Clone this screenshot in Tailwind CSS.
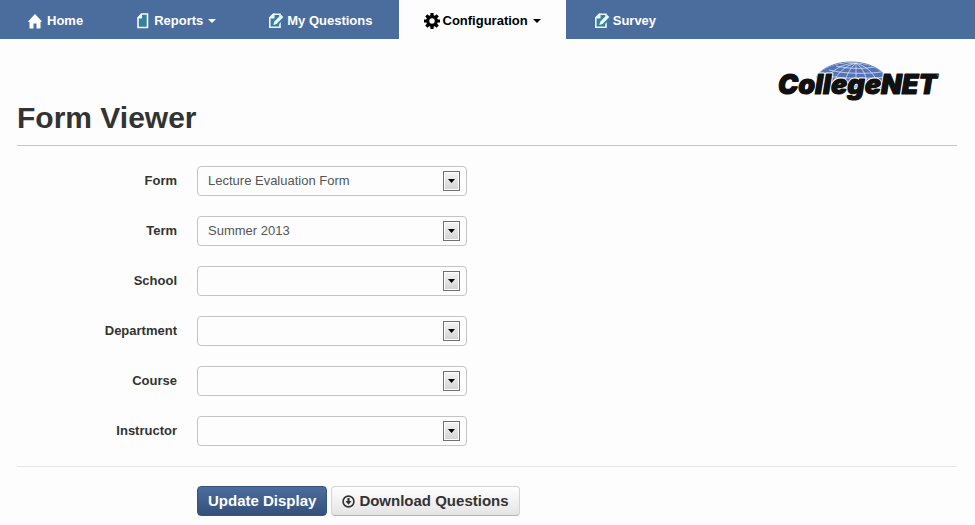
<!DOCTYPE html>
<html lang="en">
<head>
  <meta charset="UTF-8" />
  <meta name="viewport" content="width=device-width, initial-scale=1.0"/>
  <title>Form Viewer</title>
  <script src="https://cdn.jsdelivr.net/npm/@tailwindcss/browser@4"></script>
</head>
<body class="bg-[#fdfdfd] min-h-screen font-['Liberation_Sans',Arial,sans-serif] text-[13px] leading-5 text-[#333]">

  <!-- Navigation -->
  <nav class="flex h-[39px] bg-[#4b6d9e] pl-[2px] font-bold text-white">
    <a href="#" class="flex items-center gap-[3px] px-[26px] pt-[2px]">
      <svg class="size-4" viewBox="0 0 16 16" fill="currentColor"><path d="M7 1 14 8.500 12.500 9.300V15.500H8.500V10.500H5.500V15.500H1.500V9.300L0 8.500Z"/></svg>
      Home
    </a>
    <a href="#" class="flex items-center gap-[3px] px-[26px] pt-[2px]">
      <svg class="size-4" viewBox="0 0 16 16"><path d="M6.500 1H12.500V14.500H3V5Z" fill="#35809c" stroke="#f2f8fc" stroke-width="1.600"/><path d="M2.500 5.500V4.500L6 1H7V5.500Z" fill="#f2f8fc"/></svg>
      Reports
      <svg class="ml-[2px] w-2 h-1" viewBox="0 0 8 4" fill="currentColor"><path d="M0 0H8L4 4Z"/></svg>
    </a>
    <a href="#" class="flex items-center gap-[3px] px-[26px] pt-[2px]">
      <svg class="size-4" viewBox="0 0 16 16"><path d="M5.500 1.300H12V14.300H1.800V5Z" fill="#35809c" stroke="#eaf5fa" stroke-width="1.600"/><path d="M1 5.500V4.500L5 .500H6.500V5.500Z" fill="#eaf5fa"/><path d="M15 3.500 8 10.500" stroke="#35809c" stroke-width="5"/><path d="M13 1.800 15.300 4.100 8.500 11 5.300 12 6.200 8.800Z" fill="#f2f8fc"/></svg>
      My Questions
    </a>
    <a href="#" aria-current="page" class="flex items-center gap-[3px] px-[25px] pt-[2px] bg-[#fdfdfd] text-black">
      <svg class="size-4" viewBox="0 0 16 16" fill="none" stroke="currentColor"><circle cx="8" cy="8" r="4.300" stroke-width="3.200"/><path d="M8 0V3M8 13V16M0 8H3M13 8H16M2.300 2.300 4.500 4.500M11.500 11.500 13.700 13.700M13.700 2.300 11.500 4.500M4.500 11.500 2.300 13.700" stroke-width="3.200"/></svg>
      Configuration
      <svg class="ml-[2px] w-2 h-1" viewBox="0 0 8 4" fill="currentColor"><path d="M0 0H8L4 4Z"/></svg>
    </a>
    <a href="#" class="flex items-center gap-[3px] px-7 pt-[2px]">
      <svg class="size-4" viewBox="0 0 16 16"><path d="M5.500 1.300H12V14.300H1.800V5Z" fill="#35809c" stroke="#eaf5fa" stroke-width="1.600"/><path d="M1 5.500V4.500L5 .500H6.500V5.500Z" fill="#eaf5fa"/><path d="M15 3.500 8 10.500" stroke="#35809c" stroke-width="5"/><path d="M13 1.800 15.300 4.100 8.500 11 5.300 12 6.200 8.800Z" fill="#f2f8fc"/></svg>
      Survey
    </a>
  </nav>

  <main class="pl-[17px] pr-[18px]">
    <!-- Title and logo -->
    <header class="flex items-start justify-between border-b border-[#c8c8c8] pt-[19px] pb-[7px]">
      <h1 class="mt-[40px] text-[30px] leading-10 font-bold">Form Viewer</h1>
      <svg class="mr-[17px] w-[164px] h-12" viewBox="0 0 164 48" role="img" aria-label="CollegeNET">
        <path d="M40 19C53 0 97 0 110 19L106 32H44Z" fill="#5574b8"/>
        <g fill="none" stroke="#e9eef9" stroke-width="0.700">
          <path d="M80 5C68 8 59 17 55 30M80 5C74 10 69 19 67 30M80 5V30M80 5C87 10 91 19 92 30M80 5C93 9 100 18 104 30M80 5C65 6 54 12 44 30"/>
          <path d="M60 8C73 11 88 11 98 9M53 12C69 16 90 16 105 14M46 17C66 21 93 21 109 19M42 23C66 26 94 26 110 24"/>
        </g>
        <path d="M40 19C53 -1 97 -1 110 19" fill="none" stroke="#6d86bd" stroke-width="1"/>
        <text x="2" y="36" font-family="Inter, sans-serif" font-size="27" font-weight="900" font-style="italic" fill="#111" stroke="#fdfdfd" stroke-width="3" stroke-linejoin="round" paint-order="stroke">CollegeNET</text>
        <text x="2" y="36" font-family="Inter, sans-serif" font-size="27" font-weight="900" font-style="italic" fill="#111" stroke="#111" stroke-width="1" stroke-linejoin="round">CollegeNET</text>
        <circle cx="162" cy="17" r="1" fill="none" stroke="#777" stroke-width="0.600"/>
      </svg>
    </header>

    <!-- Filters -->
    <form class="pt-5">
      <div class="grid grid-cols-[160px_270px] gap-5">
        <label for="form" class="pt-[5px] text-right font-bold">Form</label>
        <div class="relative">
          <select id="form" class="block w-full h-[30px] appearance-none rounded border border-[#c4c4c4] bg-[#fdfdfd] px-[10px] text-[#555]">
            <option>Lecture Evaluation Form</option>
          </select>
          <span class="pointer-events-none absolute top-[5px] right-[7px] flex h-5 w-[17px] items-center justify-center border border-[#707070] bg-linear-to-b from-[#f5f5f5] to-[#d2d2d2] ring-1 ring-inset ring-white">
            <svg class="w-[7px] h-1" viewBox="0 0 7 4"><path d="M0 0H7L3.500 4Z"/></svg>
          </span>
        </div>

        <label for="term" class="pt-[5px] text-right font-bold">Term</label>
        <div class="relative">
          <select id="term" class="block w-full h-[30px] appearance-none rounded border border-[#c4c4c4] bg-[#fdfdfd] px-[10px] text-[#555]">
            <option>Summer 2013</option>
          </select>
          <span class="pointer-events-none absolute top-[5px] right-[7px] flex h-5 w-[17px] items-center justify-center border border-[#707070] bg-linear-to-b from-[#f5f5f5] to-[#d2d2d2] ring-1 ring-inset ring-white">
            <svg class="w-[7px] h-1" viewBox="0 0 7 4"><path d="M0 0H7L3.500 4Z"/></svg>
          </span>
        </div>

        <label for="school" class="pt-[5px] text-right font-bold">School</label>
        <div class="relative">
          <select id="school" class="block w-full h-[30px] appearance-none rounded border border-[#c4c4c4] bg-[#fdfdfd] px-[10px] text-[#555]">
            <option></option>
          </select>
          <span class="pointer-events-none absolute top-[5px] right-[7px] flex h-5 w-[17px] items-center justify-center border border-[#707070] bg-linear-to-b from-[#f5f5f5] to-[#d2d2d2] ring-1 ring-inset ring-white">
            <svg class="w-[7px] h-1" viewBox="0 0 7 4"><path d="M0 0H7L3.500 4Z"/></svg>
          </span>
        </div>

        <label for="department" class="pt-[5px] text-right font-bold">Department</label>
        <div class="relative">
          <select id="department" class="block w-full h-[30px] appearance-none rounded border border-[#c4c4c4] bg-[#fdfdfd] px-[10px] text-[#555]">
            <option></option>
          </select>
          <span class="pointer-events-none absolute top-[5px] right-[7px] flex h-5 w-[17px] items-center justify-center border border-[#707070] bg-linear-to-b from-[#f5f5f5] to-[#d2d2d2] ring-1 ring-inset ring-white">
            <svg class="w-[7px] h-1" viewBox="0 0 7 4"><path d="M0 0H7L3.500 4Z"/></svg>
          </span>
        </div>

        <label for="course" class="pt-[5px] text-right font-bold">Course</label>
        <div class="relative">
          <select id="course" class="block w-full h-[30px] appearance-none rounded border border-[#c4c4c4] bg-[#fdfdfd] px-[10px] text-[#555]">
            <option></option>
          </select>
          <span class="pointer-events-none absolute top-[5px] right-[7px] flex h-5 w-[17px] items-center justify-center border border-[#707070] bg-linear-to-b from-[#f5f5f5] to-[#d2d2d2] ring-1 ring-inset ring-white">
            <svg class="w-[7px] h-1" viewBox="0 0 7 4"><path d="M0 0H7L3.500 4Z"/></svg>
          </span>
        </div>

        <label for="instructor" class="pt-[5px] text-right font-bold">Instructor</label>
        <div class="relative">
          <select id="instructor" class="block w-full h-[30px] appearance-none rounded border border-[#c4c4c4] bg-[#fdfdfd] px-[10px] text-[#555]">
            <option></option>
          </select>
          <span class="pointer-events-none absolute top-[5px] right-[7px] flex h-5 w-[17px] items-center justify-center border border-[#707070] bg-linear-to-b from-[#f5f5f5] to-[#d2d2d2] ring-1 ring-inset ring-white">
            <svg class="w-[7px] h-1" viewBox="0 0 7 4"><path d="M0 0H7L3.500 4Z"/></svg>
          </span>
        </div>
      </div>

      <!-- Actions -->
      <div class="mt-5 flex gap-[4px] border-t border-[#e5e5e5] pt-[19px] pl-[180px] text-[15px] font-bold">
        <button type="submit" class="h-[30px] rounded border border-[#35557f] bg-linear-to-b from-[#4b6d9e] to-[#34517a] px-[10px] text-white">Update Display</button>
        <button type="button" class="flex h-[30px] items-center gap-[4px] rounded border border-[#d4d4d4] border-b-[#b5b5b5] bg-linear-to-b from-white to-[#e4e4e4] px-[10px] text-[#333]">
          <svg class="size-[13px]" viewBox="0 0 12 12" fill="none" stroke="currentColor"><circle cx="6" cy="6" r="5" stroke-width="1.500"/><path d="M6 2.800V6" stroke-width="2"/><path d="M3.200 5.500H8.800L6 9Z" fill="currentColor" stroke="none"/></svg>
          Download Questions
        </button>
      </div>
    </form>
  </main>
</body>
</html>
